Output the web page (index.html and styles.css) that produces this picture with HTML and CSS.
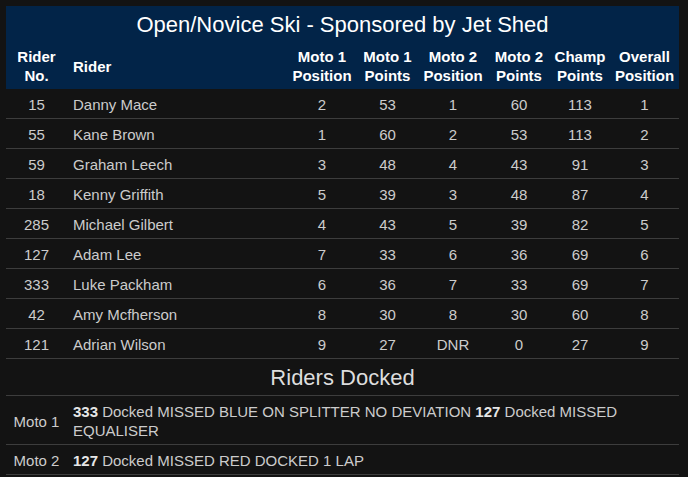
FILE: index.html
```html
<!DOCTYPE html>
<html>
<head>
<meta charset="utf-8">
<link rel="stylesheet" href="styles.css">
</head>
<body>
<table class="results">
  <colgroup>
    <col class="c-no"><col class="c-rider"><col class="c-pos"><col class="c-pts"><col class="c-pos"><col class="c-pts2"><col class="c-champ"><col class="c-over">
  </colgroup>
  <thead>
    <tr><th class="title" colspan="8">Open/Novice Ski - Sponsored by Jet Shed</th></tr>
    <tr class="heads">
      <th>Rider<br>No.</th>
      <th class="left">Rider</th>
      <th>Moto 1<br>Position</th>
      <th>Moto 1<br>Points</th>
      <th>Moto 2<br>Position</th>
      <th>Moto 2<br>Points</th>
      <th>Champ<br>Points</th>
      <th>Overall<br>Position</th>
    </tr>
  </thead>
  <tbody>
    <tr><td>15</td><td class="left">Danny Mace</td><td>2</td><td>53</td><td>1</td><td>60</td><td>113</td><td>1</td></tr>
    <tr><td>55</td><td class="left">Kane Brown</td><td>1</td><td>60</td><td>2</td><td>53</td><td>113</td><td>2</td></tr>
    <tr><td>59</td><td class="left">Graham Leech</td><td>3</td><td>48</td><td>4</td><td>43</td><td>91</td><td>3</td></tr>
    <tr><td>18</td><td class="left">Kenny Griffith</td><td>5</td><td>39</td><td>3</td><td>48</td><td>87</td><td>4</td></tr>
    <tr><td>285</td><td class="left">Michael Gilbert</td><td>4</td><td>43</td><td>5</td><td>39</td><td>82</td><td>5</td></tr>
    <tr><td>127</td><td class="left">Adam Lee</td><td>7</td><td>33</td><td>6</td><td>36</td><td>69</td><td>6</td></tr>
    <tr><td>333</td><td class="left">Luke Packham</td><td>6</td><td>36</td><td>7</td><td>33</td><td>69</td><td>7</td></tr>
    <tr><td>42</td><td class="left">Amy Mcfherson</td><td>8</td><td>30</td><td>8</td><td>30</td><td>60</td><td>8</td></tr>
    <tr><td>121</td><td class="left">Adrian Wilson</td><td>9</td><td>27</td><td>DNR</td><td>0</td><td>27</td><td>9</td></tr>
    <tr><td class="docked-title" colspan="8">Riders Docked</td></tr>
    <tr><td class="moto">Moto 1</td><td class="left" colspan="7"><b>333</b> Docked MISSED BLUE ON SPLITTER NO DEVIATION <b>127</b> Docked MISSED EQUALISER</td></tr>
    <tr><td class="moto">Moto 2</td><td class="left" colspan="7"><b>127</b> Docked MISSED RED DOCKED 1 LAP</td></tr>
  </tbody>
</table>
</body>
</html>
```
FILE: styles.css
```css
html, body {
  margin: 0;
  padding: 0;
  background: #131313;
}
body {
  padding: 6px 9px 0 6px;
  font-family: "Liberation Sans", Arial, sans-serif;
  color: #cccccc;
}
.results {
  width: 673px;
  border-collapse: collapse;
  table-layout: fixed;
  font-size: 15px;
  line-height: 19px;
}
.c-no { width: 61px; }
.c-rider { width: 220px; }
.c-pos { width: 70px; }
.c-pts { width: 61px; }
.c-pts2 { width: 62px; }
.c-champ { width: 60px; }
.c-over { width: 69px; }
thead {
  background: #022448;
  color: #ffffff;
}
.title {
  font-size: 22px;
  line-height: 26px;
  font-weight: normal;
  padding: 6px 0 5px;
  text-align: center;
}
.heads th {
  font-weight: bold;
  padding: 4px 0;
  text-align: center;
  vertical-align: middle;
}
.heads th.left {
  text-align: left;
  padding-left: 6px;
}
td {
  text-align: center;
  padding: 6px 0 4px;
  border-bottom: 1px solid #3d3d3d;
  white-space: nowrap;
}
td.left {
  text-align: left;
  padding-left: 6px;
  padding-right: 6px;
  white-space: normal;
}
td b {
  color: #e6e6e6;
}
.docked-title {
  font-size: 22px;
  line-height: 26px;
  color: #dddddd;
}
.moto {
  vertical-align: middle;
}
```
